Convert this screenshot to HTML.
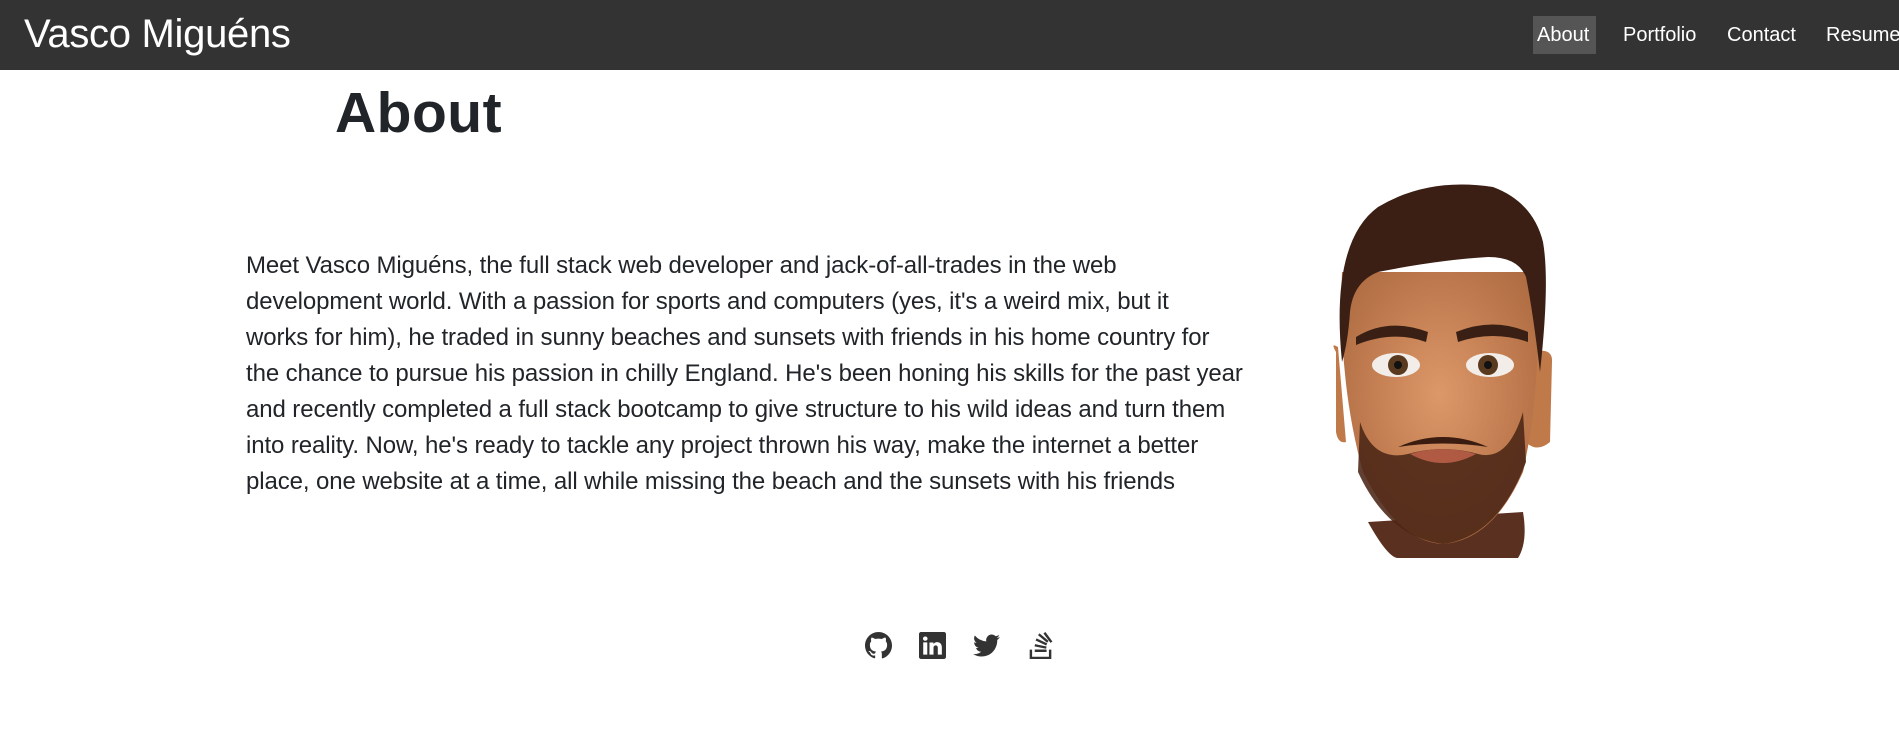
<!DOCTYPE html>
<html><head><meta charset="utf-8"><style>
*{margin:0;padding:0;box-sizing:border-box}
body{width:1899px;height:745px;background:#fff;font-family:"Liberation Sans",sans-serif;color:#212529;position:relative;overflow:hidden}
.nav{position:absolute;left:0;top:0;width:1899px;height:70px;background:#333}
.brand{position:absolute;left:24px;top:12px;font-size:40px;color:#fff;letter-spacing:-0.3px}
.nl{position:absolute;top:16px;height:38px;line-height:38px;font-size:20px;color:#fff;padding:0 4px}
h1{position:absolute;left:335px;top:80px;font-size:57px;font-weight:bold;letter-spacing:0.5px}
p{position:absolute;left:246px;top:248px;font-size:24px;line-height:36px;white-space:nowrap;letter-spacing:-0.1px}
.ic{position:absolute;top:632px;width:27px;height:27px}
</style></head><body>
<div class="nav">
<div class="brand">Vasco Miguéns</div>
<div class="nl" style="left:1533px;width:63px;background:#555">About</div>
<div class="nl" style="left:1619px">Portfolio</div>
<div class="nl" style="left:1723px">Contact</div>
<div class="nl" style="left:1822px">Resume</div>
</div>
<h1>About</h1>
<p>Meet Vasco Miguéns, the full stack web developer and jack-of-all-trades in the web<br>development world. With a passion for sports and computers (yes, it's a weird mix, but it<br>works for him), he traded in sunny beaches and sunsets with friends in his home country for<br>the chance to pursue his passion in chilly England. He's been honing his skills for the past year<br>and recently completed a full stack bootcamp to give structure to his wild ideas and turn them<br>into reality. Now, he's ready to tackle any project thrown his way, make the internet a better<br>place, one website at a time, all while missing the beach and the sunsets with his friends</p>
<svg style="position:absolute;left:1328px;top:182px" width="232" height="376" viewBox="0 0 232 376">
<defs><radialGradient id="sk" cx="50%" cy="45%" r="60%"><stop offset="0" stop-color="#dc9868"/><stop offset="1" stop-color="#b06c42"/></radialGradient></defs>
<path d="M40 340 Q60 376 70 376 L190 376 Q200 360 195 330Z" fill="#5a3020"/>
<path d="M8 170 Q2 160 10 165 L18 260 Q10 262 8 250Z" fill="#c07a4a"/>
<path d="M205 170 Q225 165 224 180 L222 260 Q210 270 200 262Z" fill="#c07a4a"/>
<path d="M14 90 Q10 200 35 290 Q70 360 115 362 Q165 358 195 290 Q215 200 208 90Z" fill="url(#sk)"/>
<path d="M30 290 Q60 355 115 362 Q170 355 198 280 L195 230 Q180 280 150 272 Q115 262 80 272 Q45 280 32 240Z" fill="#4a2616" opacity="0.88"/>
<path d="M70 265 Q115 245 160 265 Q115 258 70 265Z" fill="#3a1c10"/>
<path d="M82 272 Q115 262 148 272 Q115 290 82 272Z" fill="#b05a44"/>
<path d="M14 180 Q2 60 50 25 Q100 -5 165 5 Q205 20 215 60 Q222 100 212 190 Q205 130 198 95 Q190 75 160 75 Q110 78 50 90 Q25 100 22 130 Q20 160 14 180Z" fill="#3b1f14"/>
<path d="M28 155 Q60 135 100 150 L98 160 Q65 148 28 163Z" fill="#3a2014"/>
<path d="M128 150 Q165 135 200 150 L200 160 Q165 148 130 160Z" fill="#3a2014"/>
<ellipse cx="68" cy="183" rx="24" ry="12" fill="#f2ede8"/><circle cx="70" cy="183" r="10" fill="#5a3a1e"/><circle cx="70" cy="183" r="4" fill="#111"/>
<ellipse cx="162" cy="183" rx="24" ry="12" fill="#f2ede8"/><circle cx="160" cy="183" r="10" fill="#5a3a1e"/><circle cx="160" cy="183" r="4" fill="#111"/>
</svg>
<svg class="ic" style="left:865px" viewBox="0 0 16 16"><path fill="#333" d="M8 0C3.58 0 0 3.580 0 8c0 3.54 2.29 6.53 5.47 7.590.4.07.55-.17.55-.38v-1.33c-2.23.48-2.7-1.07-2.7-1.07-.36-.92-.89-1.170-.89-1.17-.73-.5.05-.49.05-.49.8.06 1.23.83 1.23.83.72 1.22 1.87.87 2.33.66.07-.52.28-.87.5-1.07-1.78-.2-3.64-.89-3.64-3.95 0-.87.31-1.59.82-2.15-.08-.2-.36-1.02.08-2.12 0 0 .67-.21 2.2.82a7.6 7.6 0 0 1 4 0c1.53-1.04 2.2-.82 2.2-.82.44 1.1.16 1.92.08 2.12.51.56.82 1.27.82 2.15 0 3.07-1.870 3.75-3.65 3.95.29.25.54.73.54 1.48v2.2c0 .21.15.46.55.38A8 8 0 0 0 16 8c0-4.42-3.58-8-8-8z"/></svg>
<svg class="ic" style="left:919px" viewBox="0 0 16 16"><path fill="#333" d="M0 1.15C0 .52.52 0 1.18 0h13.64C15.48 0 16 .52 16 1.15v13.7c0 .63-.52 1.15-1.18 1.15H1.18C.52 16 0 15.48 0 14.85zM4.9 13.4V6.17H2.5v7.23zM3.7 5.18c.84 0 1.36-.56 1.36-1.25C5.04 3.22 4.54 2.7 3.72 2.7s-1.36.52-1.36 1.23c0 .69.52 1.25 1.32 1.25zm4.9 8.22V9.36c0-.22.02-.43.08-.59.17-.43.57-.88 1.24-.88.87 0 1.22.66 1.22 1.64v3.87h2.4V9.25c0-2.22-1.18-3.25-2.77-3.25-1.28 0-1.85.7-2.170 1.2v-1H6.2c.03.68 0 7.23 0 7.23z"/></svg>
<svg class="ic" style="left:973px" viewBox="0 0 16 16"><path fill="#333" d="M5.03 14.5c6.04 0 9.34-5 9.34-9.34v-.42A6.7 6.7 0 0 0 16 3.04a6.6 6.6 0 0 1-1.89.52 3.3 3.3 0 0 0 1.45-1.82 6.6 6.6 0 0 1-2.090.8A3.28 3.28 0 0 0 7.88 5.53 9.32 9.32 0 0 1 1.11 2.1a3.28 3.28 0 0 0 1.02 4.38A3.3 3.3 0 0 1 .64 6.07v.04a3.28 3.28 0 0 0 2.63 3.22 3.3 3.3 0 0 1-1.48.06 3.29 3.29 0 0 0 3.07 2.28A6.6 6.6 0 0 1 0 13.03a9.3 9.3 0 0 0 5.03 1.47"/></svg>
<svg class="ic" style="left:1028px" viewBox="0 0 16 16"><path fill="#333" d="M12.4 14.7v-4.28h1.43V16H1v-5.58h1.43v4.28z"/><path fill="#333" d="M4 10.4h7v1.43H4zm.17-3.25 6.84 1.43-.3 1.38-6.84-1.43zm.9-3.38 6.33 2.96-.6 1.28-6.33-2.95zM6.830.8l5.37 4.48-.9 1.07L5.93 1.88zM10.3 0l4.17 5.6-1.15.85L9.15.86z"/></svg>
</body></html>
